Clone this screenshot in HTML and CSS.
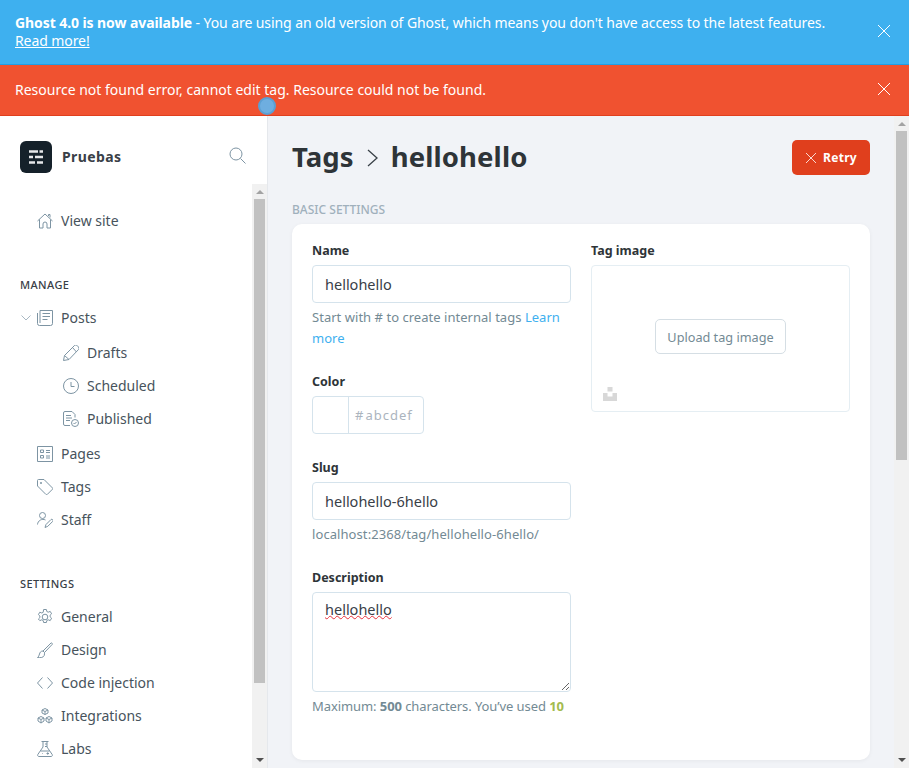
FILE: index.html
```html
<!DOCTYPE html>
<html>
<head>
  <meta name="viewport" content="initial-scale=1" />
  <title>Tags - Pruebas</title>
  <link rel="stylesheet" href="styles.css">
</head>
<body>
  <div class="alert alert-blue">
    <p><strong>Ghost 4.0 is now available</strong> - You are using an old version of Ghost, which means you don't have access to the latest features.<br><a href="#">Read more!</a></p>
    <svg class="alert-close" viewBox="0 0 12 12"><path d="M0 0l12 12M12 0L0 12"/></svg>
  </div>
  <div class="alert alert-red">
    <p>Resource not found error, cannot edit tag. Resource could not be found.</p>
    <svg class="alert-close" viewBox="0 0 12 12"><path d="M0 0l12 12M12 0L0 12"/></svg>
  </div>
  <div class="touch-dot"></div>

  <div class="app">
    <aside class="sidebar">
      <div class="brand">
        <div class="brand-logo">
          <svg viewBox="0 0 32 32"><path d="M9 10.500h9M19.500 10.500H23M9 16h4M15 16h8M9 21.500h6M17 21.500h6"/></svg>
        </div>
        <span class="brand-name">Pruebas</span>
        <svg class="brand-search" viewBox="0 0 17 17"><circle cx="7" cy="7" r="6"/><path d="M11.500 11.500l5 5"/></svg>
      </div>

      <div class="sidebar-body">
        <nav class="nav">
          <a class="nav-item first" href="#">
            <svg class="icon" viewBox="0 0 16 16"><path d="M.5 8L8 1l7.500 7M2.500 6.500V15h3.500v-4a2 2 0 0 1 4 0v4h3.500V6.500M11.500 3V1.500h1.500v3"/></svg>
            View site
          </a>

          <h4 class="nav-title">Manage</h4>
          <a class="nav-item" href="#">
            <svg class="caret" viewBox="0 0 10 6"><path d="M.5.5L5 5 9.500.5"/></svg>
            <svg class="icon" viewBox="0 0 16 16"><path d="M3 .5h12.500v13a2 2 0 0 1-2 2H2.500a2 2 0 0 1-2-2V3M3 .5V13M5.500 3.500h7.500M5.500 6.500h7.500M5.500 9.500h5"/></svg>
            Posts
          </a>
          <a class="nav-item sub" href="#">
            <svg class="icon" viewBox="0 0 16 16"><path d="M.5 15.500l1-5L11 1a2 2 0 0 1 3.500 0l1 1a2 2 0 0 1 0 2.500L6 14.500zM1.500 10.500l4.500 4M9.500 2.500l4 4.500"/></svg>
            Drafts
          </a>
          <a class="nav-item sub sub-next" href="#">
            <svg class="icon" viewBox="0 0 16 16"><circle cx="8" cy="8" r="7.500"/><path d="M8 4v4.500h3.500"/></svg>
            Scheduled
          </a>
          <a class="nav-item sub sub-next" href="#">
            <svg class="icon" viewBox="0 0 16 16"><path d="M7 14.500H2a1.500 1.500 0 0 1-1.500-1.500V2A1.500 1.500 0 0 1 2 .5h7l3 3v3M3 4.500h5M3 7h6M3 9.500h4"/><circle cx="12" cy="12" r="3.500"/><path d="M10.500 12l1 1 2-2"/></svg>
            Published
          </a>
          <a class="nav-item" href="#">
            <svg class="icon" viewBox="0 0 16 16"><path d="M.5.5h15v15H.5zM3.500 4h3v2.500h-3zM3.500 9.500h3V12h-3zM9 4.500h4M9 6.500h4M9 10h4M9 12h4"/></svg>
            Pages
          </a>
          <a class="nav-item" href="#">
            <svg class="icon" viewBox="0 0 16 16"><path d="M.5 1.500a1 1 0 0 1 1-1H7l8.500 8.500a1 1 0 0 1 0 1.200l-5.300 5.300a1 1 0 0 1-1.200 0L.5 7zM4.500 3.500v1h-1v-1z"/></svg>
            Tags
          </a>
          <a class="nav-item" href="#">
            <svg class="icon" viewBox="0 0 16 16"><circle cx="5.500" cy="3.500" r="3"/><path d="M.5 12.500a5.500 5.500 0 0 1 8-4.500M8 15.500l1-3 5-5a1.300 1.300 0 0 1 1.800 1.800l-5 5z"/></svg>
            Staff
          </a>

          <h4 class="nav-title">Settings</h4>
          <a class="nav-item" href="#">
            <svg class="icon" viewBox="0 0 16 16"><circle cx="8" cy="8" r="2.800"/><path d="M6.600.5h2.800l.4 2 1.400.7 2-.8 1.400 2.400-1.500 1.400v1.600l1.500 1.400-1.400 2.400-2-.8-1.400.7-.4 2H6.600l-.4-2-1.400-.7-2 .8L1.400 10l1.500-1.400V7L1.400 5.600l1.400-2.400 2 .8 1.400-.7z"/></svg>
            General
          </a>
          <a class="nav-item" href="#">
            <svg class="icon" viewBox="0 0 16 16"><path d="M6 9l8-8a1 1 0 0 1 1.300 1.300L7.500 10.500zM6 9c-2.500 0-3 1.500-3.500 3S1.500 15 .5 15.500c3 .5 6 0 6.700-2 .4-1.200.3-2.200.3-3"/></svg>
            Design
          </a>
          <a class="nav-item" href="#">
            <svg class="icon" viewBox="0 0 16 16"><path d="M5.500 2.500L.5 8l5 5.500M10.500 2.500l5 5.500-5 5.500"/></svg>
            Code injection
          </a>
          <a class="nav-item" href="#">
            <svg class="icon" viewBox="0 0 16 16"><path d="M8 .5l3 1.500v3L8 6.500 5 5V2zM5 2l3 1.500L11 2M8 3.500V6.500M4 8.500l3 1.500v3l-3 2-3-2v-3zM1 10l3 1.500L7 10M4 11.500v3.500M12 8.500l3 1.500v3l-3 2-3-2v-3zM9 10l3 1.500 3-1.500M12 11.500v3.500"/></svg>
            Integrations
          </a>
          <a class="nav-item" href="#">
            <svg class="icon" viewBox="0 0 16 16"><path d="M4.500.5h7M6 .5v5.500L.8 13.500a1.300 1.300 0 0 0 1 2h12.400a1.300 1.300 0 0 0 1-2L10 6V.5M8 3h2M8 5.500h2M3.500 10h9M9.500 12.500h2.500M10.700 11.300v2.400M5 12.500h.6"/></svg>
            Labs
          </a>
        </nav>
        <div class="scrollbar">
          <span class="arrow-up"></span>
          <div class="thumb thumb-side"></div>
          <span class="arrow-down"></span>
        </div>
      </div>
    </aside>

    <main class="main">
      <div class="content">
        <header class="page-head">
          <h1 class="page-title">
            Tags
            <svg class="crumb" viewBox="0 0 11 18"><path d="M1 1l9 8-9 8"/></svg>
            hellohello
          </h1>
          <button class="btn-retry">
            <svg viewBox="0 0 10 10"><path d="M0 0l10 10M10 0L0 10"/></svg>
            Retry
          </button>
        </header>

        <h5 class="section-title">Basic settings</h5>

        <section class="card">
          <div class="col">
            <label class="field-label">Name</label>
            <div class="input">hellohello</div>
            <p class="help help-name">Start with # to create internal tags <a href="#">Learn more</a></p>

            <label class="field-label label-next">Color</label>
            <div class="color-input">
              <span class="swatch"></span>
              <span class="hash">#</span><span class="hex">abcdef</span>
            </div>

            <label class="field-label label-slug">Slug</label>
            <div class="input">hellohello-6hello</div>
            <p class="help help-slug">localhost:2368/tag/hellohello-6hello/</p>

            <label class="field-label label-next">Description</label>
            <div class="textarea"><span class="misspelled">hellohello</span></div>
            <p class="help help-desc">Maximum: <b>500</b> characters. You’ve used <b class="count">10</b></p>
          </div>

          <div class="col">
            <label class="field-label">Tag image</label>
            <div class="image-box">
              <button class="btn-upload">Upload tag image</button>
              <svg class="unsplash" viewBox="0 0 14 14"><path d="M4.500 0h5v4.500h-5zM0 6h4.500v3.500h5V6H14v8H0z"/></svg>
            </div>
          </div>
        </section>
      </div>
      <div class="scrollbar">
        <span class="arrow-up"></span>
        <div class="thumb thumb-main"></div>
        <span class="arrow-down"></span>
      </div>
    </main>
  </div>
</body>
</html>
```

FILE: styles.css
```css
* {
  box-sizing: border-box;
}

html, body {
  height: 100%;
}

body {
  position: relative;
  display: flex;
  flex-direction: column;
  margin: 0;
  overflow: hidden;
  font-family: "Noto Sans", "Open Sans", sans-serif;
  font-size: 14px;
  color: #394047;
  background: #fff;
}

a {
  color: inherit;
  text-decoration: none;
}

/* alerts */
.alert {
  display: flex;
  justify-content: space-between;
  flex-shrink: 0;
  padding-left: 15px;
  color: #fff;
  font-size: 14px;
  line-height: 18px;
}

.alert p {
  margin: 0;
}

.alert a {
  text-decoration: underline;
}

.alert-blue {
  height: 65px;
  padding-top: 14px;
  background: #3eb0ef;
  border-bottom: 1px solid #1f9fe6;
}

.alert-blue p {
  letter-spacing: -0.085px;
}

.alert-red {
  height: 51px;
  padding-top: 16px;
  background: #f05230;
  border-bottom: 1px solid #e03f1d;
}

.alert-close {
  flex-shrink: 0;
  width: 12px;
  height: 12px;
  margin: 11px 19px 0 0;
  fill: none;
  stroke: #fff;
  stroke-width: 1;
}

.alert-red .alert-close {
  margin-top: 2px;
}

.touch-dot {
  position: absolute;
  left: 258px;
  top: 97px;
  width: 18px;
  height: 18px;
  border: 2px solid #5b9fd3;
  border-radius: 50%;
  background: #6eaee0;
}

/* layout */
.app {
  display: flex;
  flex: 1;
  min-height: 0;
}

.sidebar {
  display: flex;
  flex-direction: column;
  flex-shrink: 0;
  width: 268px;
  border-right: 1px solid #e5e8ec;
  background: #fff;
}

.brand {
  display: flex;
  align-items: center;
  flex-shrink: 0;
  height: 68px;
  padding: 14px 21px 0 20px;
}

.brand-logo {
  flex-shrink: 0;
  width: 32px;
  height: 32px;
  border-radius: 6px;
  background: #15212a;
}

.brand-logo svg {
  display: block;
  fill: none;
  stroke: #e6e8ea;
  stroke-width: 2.500;
}

.brand-name {
  flex: 1;
  margin: 0 0 2px 10px;
  font-size: 14px;
  font-weight: 700;
  letter-spacing: 0.4px;
}

.brand-search {
  width: 17px;
  height: 17px;
  margin-bottom: 3px;
  fill: none;
  stroke: #7d94a3;
  stroke-width: 1;
}

.sidebar-body {
  display: flex;
  flex: 1;
  min-height: 0;
}

.nav {
  flex: 1;
  padding-left: 20px;
}

.nav-item {
  display: flex;
  align-items: center;
  position: relative;
  height: 33px;
  padding-left: 17px;
  font-size: 14px;
  color: #47535c;
  white-space: nowrap;
}

.nav-item.first {
  margin-top: 20px;
}

.nav-item.sub {
  margin-top: 2px;
  padding-left: 43px;
}

.nav-item.sub-next {
  margin-top: 0;
}

.nav-item.sub + .nav-item:not(.sub) {
  margin-top: 2px;
}

.icon {
  flex-shrink: 0;
  width: 16px;
  height: 16px;
  margin-right: 8px;
  fill: none;
  stroke: #7d94a3;
  stroke-width: 1;
}

.caret {
  position: absolute;
  left: 1px;
  top: 14px;
  width: 10px;
  height: 6px;
  fill: none;
  stroke: #a9b8c3;
  stroke-width: 1;
}

.nav-title {
  margin: 0;
  height: 24px;
  font-size: 11px;
  line-height: 15px;
  font-weight: 500;
  letter-spacing: 0.4px;
  text-transform: uppercase;
}

.nav-item + .nav-title {
  margin-top: 40px;
}

/* fake scrollbars */
.scrollbar {
  position: relative;
  flex-shrink: 0;
  width: 15px;
  background: #f1f1f1;
}

.thumb {
  position: absolute;
  left: 2px;
  right: 2px;
  top: 15px;
  background: #c1c1c1;
}

.thumb-side {
  height: 484px;
}

.thumb-main {
  height: 329px;
}

.arrow-up,
.arrow-down {
  position: absolute;
  left: 4px;
  border-left: 4px solid transparent;
  border-right: 4px solid transparent;
}

.arrow-up {
  top: 6px;
  border-bottom: 4px solid #a3a3a3;
}

.arrow-down {
  bottom: 6px;
  border-top: 4px solid #505050;
}

/* main */
.main {
  display: flex;
  flex: 1;
  min-width: 0;
  background: #f1f3f7;
}

.content {
  flex: 1;
  min-width: 0;
  padding: 24px 24px 0;
}

.page-head {
  display: flex;
  align-items: center;
  justify-content: space-between;
  height: 35px;
}

.page-title {
  display: flex;
  align-items: center;
  margin: 0 0 2px;
  font-size: 27.500px;
  line-height: 35px;
  font-weight: 700;
  letter-spacing: 0.1px;
  color: #2e3438;
}

.crumb {
  width: 11px;
  height: 18px;
  margin: 2px 13px 0 13px;
  fill: none;
  stroke: #394047;
  stroke-width: 1.300;
}

.btn-retry {
  display: flex;
  align-items: center;
  width: 78px;
  height: 35px;
  padding: 0 0 0 14px;
  border: 0;
  border-radius: 5px;
  background: #e03f1d;
  color: #fff;
  font-family: inherit;
  font-size: 12px;
  font-weight: 700;
  letter-spacing: 0.3px;
}

.btn-retry svg {
  width: 10px;
  height: 10px;
  margin-right: 7px;
  fill: none;
  stroke: #fff;
  stroke-width: 0.8;
}

.section-title {
  margin: 27px 0 0;
  height: 22px;
  font-size: 12px;
  line-height: 16px;
  font-weight: 500;
  color: #a0b0bc;
  text-transform: uppercase;
}

.card {
  display: flex;
  gap: 20px;
  height: 536px;
  padding: 19px 20px 0;
  border-radius: 10px;
  background: #fff;
  box-shadow: 0 1px 4px rgba(0, 0, 0, 0.05);
}

.col {
  flex: 1;
  min-width: 0;
}

.field-label {
  display: block;
  height: 22px;
  font-size: 12.500px;
  line-height: 16px;
  font-weight: 700;
  color: #2e3438;
}

.label-next {
  margin-top: 25px;
}

.label-slug {
  margin-top: 26px;
}

.input {
  height: 38px;
  padding: 0 12px;
  border: 1px solid #d5e3ec;
  border-radius: 4px;
  font-size: 14.500px;
  line-height: 36px;
  color: #394047;
}

.help {
  margin: 4px 0 0;
  font-size: 13px;
  line-height: 21px;
  color: #738a94;
}

.help a {
  color: #3eb0ef;
}

.help b {
  font-weight: 700;
}

.help-name {
  letter-spacing: 0.03px;
}

.help-slug {
  letter-spacing: 0.08px;
}

.help-desc {
  letter-spacing: -0.08px;
}

.count {
  color: #a4bb4f;
}

.color-input {
  display: flex;
  align-items: center;
  width: 112px;
  height: 38px;
  border: 1px solid #d5e3ec;
  border-radius: 4px;
  color: #abb4be;
  font-size: 13px;
  letter-spacing: 1px;
}

.swatch {
  width: 36px;
  height: 100%;
  margin-right: 6px;
  border-right: 1px solid #d5e3ec;
}

.hash {
  margin-right: 1px;
}

.textarea {
  width: 259px;
  height: 100px;
  padding: 4px 12px;
  overflow: auto;
  resize: both;
  border: 1px solid #d5e3ec;
  border-radius: 4px;
  font-size: 14.500px;
  line-height: 24px;
}

.misspelled {
  text-decoration: underline wavy #e8323c 1px;
  text-underline-offset: 0;
}

.image-box {
  position: relative;
  display: flex;
  justify-content: center;
  align-items: flex-start;
  height: 147px;
  padding-top: 53px;
  border: 1px solid #e5eef3;
  border-radius: 4px;
}

.btn-upload {
  width: 131px;
  height: 35px;
  padding: 0;
  border: 1px solid #d5dee4;
  border-radius: 5px;
  background: #fff;
  color: #738a94;
  font-family: inherit;
  font-size: 12.700px;
}

.unsplash {
  position: absolute;
  left: 11px;
  bottom: 10px;
  width: 14px;
  height: 14px;
  fill: #d8d8d8;
}
```
